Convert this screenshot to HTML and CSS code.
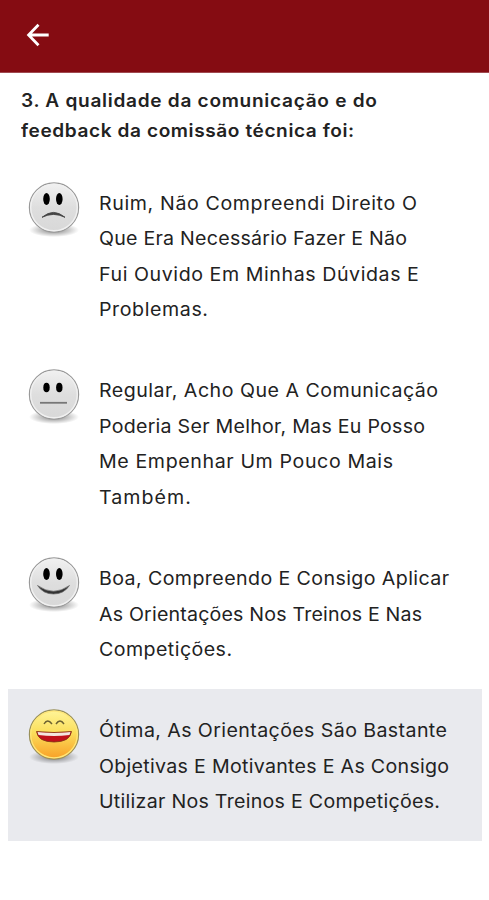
FILE: index.html
```html
<!DOCTYPE html>
<html lang="pt-BR">
<head>
<meta charset="utf-8">
<title>Avaliação</title>
<link rel="stylesheet" href="styles.css">
</head>
<body>
<svg class="defs" aria-hidden="true">
  <defs>
    <linearGradient id="gray" x1="0" y1="0" x2="0" y2="1"><stop offset="0" stop-color="#f1f1f1"/><stop offset=".5" stop-color="#dedede"/><stop offset="1" stop-color="#d8d8d8"/></linearGradient>
    <linearGradient id="gold" x1="0" y1="0" x2="0" y2="1"><stop offset="0" stop-color="#fff59a"/><stop offset=".45" stop-color="#fbdf5c"/><stop offset="1" stop-color="#f99f26"/></linearGradient>
    <radialGradient id="shade"><stop offset="0" stop-color="#000" stop-opacity=".5"/><stop offset="1" stop-color="#000" stop-opacity="0"/></radialGradient>
    <g id="head"><ellipse cx="26" cy="48" rx="25" ry="7" fill="url(#shade)"/><circle cx="26" cy="25.5" r="24.6" fill="url(#gray)" stroke="#999" stroke-width="1.2"/><circle cx="26" cy="25.5" r="23.3" fill="none" stroke="#f0f0f0" stroke-width="1.4"/></g>
  </defs>
</svg>
<header class="bar">
  <svg class="back" viewBox="0 0 24 24"><path d="M22.7 12H3M12.5 1.8 2.6 12l9.9 10.2"/></svg>
</header>
<main class="page">
  <h1 class="question"><span class="line q1">3. A qualidade da comunicação e do</span><span class="line q2">feedback da comissão técnica foi:</span></h1>
  <ul class="options">
    <li class="option">
      <svg class="face" viewBox="0 0 52 58"><use href="#head"/><ellipse cx="18.5" cy="17" rx="3.3" ry="6"/><ellipse cx="31.3" cy="17" rx="3.3" ry="6"/><path d="M14 35.3Q25.5 25.5 37 35.3Q25.5 29.5 14 35.3Z" fill="#444" stroke="#444" stroke-width=".9"/></svg>
      <p class="text"><span class="line a1">Ruim, Não Compreendi Direito O</span><span class="line a2">Que Era Necessário Fazer E Não</span><span class="line a3">Fui Ouvido Em Minhas Dúvidas E</span><span class="line a4">Problemas.</span></p>
    </li>
    <li class="option">
      <svg class="face" viewBox="0 0 52 58"><use href="#head"/><ellipse cx="18.5" cy="18.5" rx="3.2" ry="4.7"/><ellipse cx="31.3" cy="18.5" rx="3.2" ry="4.7"/><path d="M12 33.8H39" stroke="#777" stroke-width="1.8"/></svg>
      <p class="text"><span class="line b1">Regular, Acho Que A Comunicação</span><span class="line b2">Poderia Ser Melhor, Mas Eu Posso</span><span class="line b3">Me Empenhar Um Pouco Mais</span><span class="line b4">Também.</span></p>
    </li>
    <li class="option">
      <svg class="face" viewBox="0 0 52 58"><use href="#head"/><ellipse cx="18.5" cy="17" rx="3.3" ry="6"/><ellipse cx="31.3" cy="17" rx="3.3" ry="6"/><path d="M9.5 28.5Q25.5 40 41.5 28.5Q36 37 25.5 37Q15 37 9.5 28.5Z" fill="#333" stroke="#666" stroke-width=".7"/></svg>
      <p class="text"><span class="line c1">Boa, Compreendo E Consigo Aplicar</span><span class="line c2">As Orientações Nos Treinos E Nas</span><span class="line c3">Competições.</span></p>
    </li>
    <li class="option selected">
      <svg class="face" viewBox="0 0 52 58"><ellipse cx="26" cy="48" rx="25" ry="7" fill="url(#shade)"/><circle cx="26" cy="25.5" r="24.6" fill="url(#gold)" stroke="#99905a" stroke-width="1.2"/><circle cx="26" cy="25.5" r="23.3" fill="none" stroke="#ffe77a" stroke-width="1.2"/><path d="M16 15Q19.5 9 24 15M28 15Q32 9 36 15" fill="none" stroke="#6b6030" stroke-width="1.4"/><path d="M8.5 22.5Q26 24.5 43.5 22.5Q42 33 26 33Q10 33 8.5 22.5Z" fill="#c0101a" stroke="#7e3512" stroke-width=".8"/><path d="M9.5 23Q26 24.8 42.5 23L41.5 26Q26 28 10.5 26Z" fill="#f3e6df"/></svg>
      <p class="text"><span class="line d1">Ótima, As Orientações São Bastante</span><span class="line d2">Objetivas E Motivantes E As Consigo</span><span class="line d3">Utilizar Nos Treinos E Competições.</span></p>
    </li>
  </ul>
</main>
</body>
</html>
```
FILE: styles.css
```css
* { box-sizing: border-box; margin: 0; padding: 0; }
body { background: #fff; color: #222; font-family: Inter, "Liberation Sans", sans-serif; }
.defs { position: absolute; width: 0; height: 0; }
.bar { height: 73px; background: #850c12; border-bottom: 1px solid #a04a50; padding: 23px 0 0 26px; }
.back { display: block; width: 24px; height: 24px; fill: none; stroke: #fff; stroke-width: 2.8; }
.page { padding: 12.5px 7px 0 8px; }
.question { margin-left: 13px; font-size: 18px; font-weight: 600; line-height: 30px; }
.line { display: block; width: max-content; white-space: nowrap; transform: scaleX(1.06); transform-origin: left; }
.options { list-style: none; margin-top: 16px; }
.option { display: flex; align-items: flex-start; gap: 19px; padding: 24px 0 21.2px 20px; margin-bottom: .2px; }
.selected { background: #e9eaee; }
.face { width: 52px; height: 58px; margin-top: -4px; flex: none; }
.text { font-size: 18.5px; line-height: 35.6px; }

.q1 { letter-spacing: .66px; }
.q2 { letter-spacing: .55px; }
.a1 { letter-spacing: .58px; }
.a2 { letter-spacing: .22px; }
.a3 { letter-spacing: .53px; }
.a4 { letter-spacing: .55px; }
.b1 { letter-spacing: .46px; }
.b2 { letter-spacing: .24px; }
.b3 { letter-spacing: .57px; }
.b4 { letter-spacing: .99px; }
.c1 { letter-spacing: .38px; }
.c2 { letter-spacing: .17px; }
.c3 { letter-spacing: .41px; }
.d1 { letter-spacing: .37px; }
.d2 { letter-spacing: .27px; }
.d3 { letter-spacing: .25px; }
```
